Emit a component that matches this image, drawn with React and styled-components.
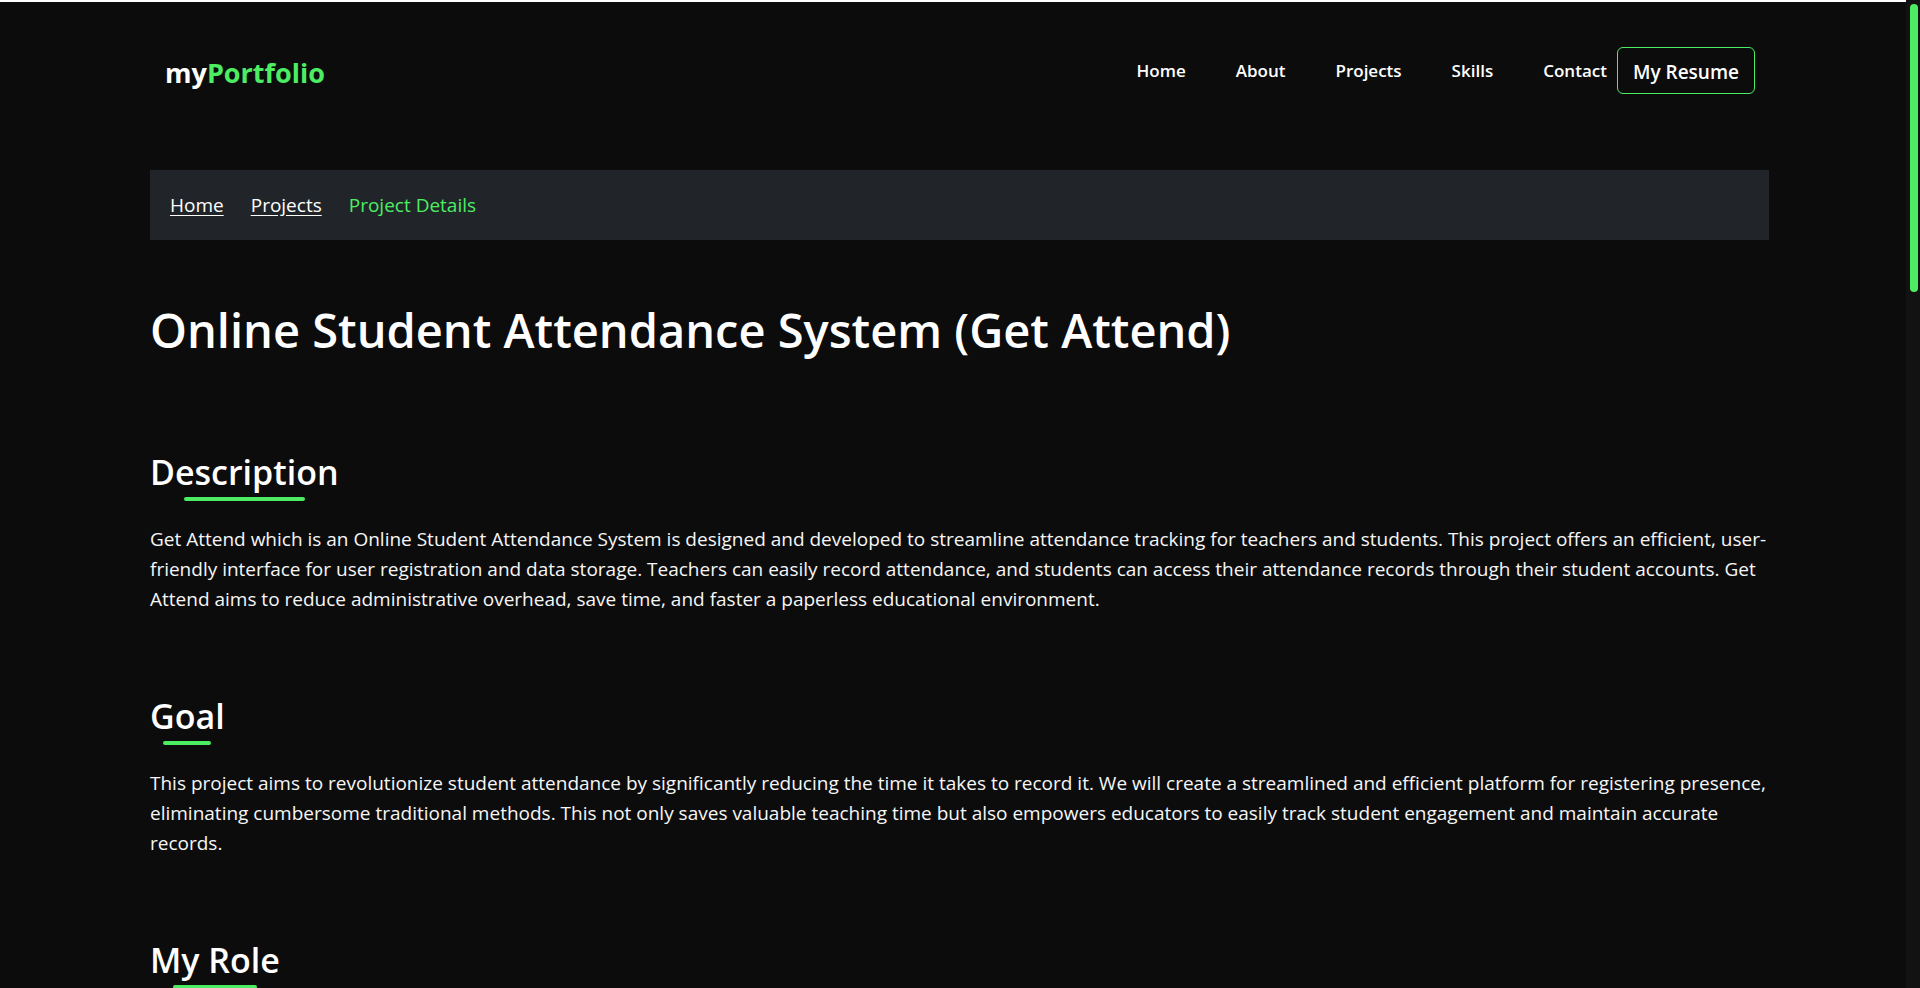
import styled, { createGlobalStyle } from 'styled-components'

const GlobalStyle = createGlobalStyle`
  body {
    margin: 0;
    border-top: 2px solid #ffffff;
    background: #0c0c0c;
    color: #ffffff;
    font-family: "Open Sans", "Noto Sans", sans-serif;
  }
  * {
    box-sizing: border-box;
  }
`

const green = '#4ded63'

const Page = styled.div`
  padding: 0 151px 0 150px;
`

const ScrollTrack = styled.div`
  position: fixed;
  top: 0;
  right: 0;
  width: 14px;
  height: 100vh;
  background: #121212;
`

const ScrollThumb = styled.div`
  margin: 4px 2px 0 4px;
  height: 288px;
  border-radius: 4px;
  background: ${green};
`

const Header = styled.header`
  height: 138px;
  padding: 0 14px 0 15px;
  display: flex;
  align-items: center;
  justify-content: space-between;
`

const Logo = styled.a`
  font-size: 27px;
  font-weight: 700;
  color: #ffffff;
  text-decoration: none;
  margin-top: 3px;
  span {
    color: ${green};
  }
`

const Nav = styled.nav`
  display: flex;
  align-items: center;
`

const NavLink = styled.a`
  font-size: 17px;
  font-weight: 600;
  color: #ffffff;
  text-decoration: none;
  margin-left: 50px;
  margin-bottom: 2px;
`

const ResumeButton = styled.button`
  margin: 0 0 1px 10px;
  height: 47px;
  padding: 2px 15px 0;
  background: transparent;
  border: 1px solid ${green};
  border-radius: 6px;
  color: #ffffff;
  font-family: inherit;
  font-size: 19px;
  font-weight: 600;
`

const Breadcrumb = styled.div`
  margin-top: 30px;
  height: 70px;
  background: #212529;
  display: flex;
  align-items: center;
  gap: 27px;
  padding: 0 20px;
  font-size: 19px;
`

const Crumb = styled.a`
  color: ${({ $active }) => ($active ? green : '#ffffff')};
  text-decoration: ${({ $active }) => ($active ? 'none' : 'underline')};
  text-underline-offset: 3px;
`

const Title = styled.h1`
  margin: 62px 0 0;
  font-size: 47px;
  font-weight: 600;
  line-height: 1.2;
`

const Section = styled.section`
  margin-top: ${({ $first }) => ($first ? '94px' : '82px')};
`

const Heading = styled.h2`
  display: inline-block;
  margin: 0;
  font-size: 34px;
  font-weight: 600;
  line-height: 1.2;
  &::after {
    content: '';
    display: block;
    width: 64%;
    height: 4px;
    margin: 4px auto 0;
    border-radius: 2px;
    background: ${green};
  }
`

const Text = styled.p`
  margin: 23px 0 0;
  font-size: 19px;
  line-height: 30px;
  color: #f6f6f6;
`

const List = styled.ul`
  margin: 23px 0 0;
  padding-left: 24px;
  font-size: 19px;
  line-height: 30px;
  color: #f6f6f6;
`

const Footer = styled.footer`
  margin-top: 120px;
  padding: 40px 0 60px;
  border-top: 1px solid #212529;
  text-align: center;
  font-size: 16px;
  color: #9a9a9a;
`

const sections = [
  {
    title: 'Description',
    text: 'Get Attend which is an Online Student Attendance System is designed and developed to streamline attendance tracking for teachers and students. This project offers an efficient, user-friendly interface for user registration and data storage. Teachers can easily record attendance, and students can access their attendance records through their student accounts. Get Attend aims to reduce administrative overhead, save time, and faster a paperless educational environment.',
  },
  {
    title: 'Goal',
    text: 'This project aims to revolutionize student attendance by significantly reducing the time it takes to record it. We will create a streamlined and efficient platform for registering presence, eliminating cumbersome traditional methods. This not only saves valuable teaching time but also empowers educators to easily track student engagement and maintain accurate records.',
  },
  {
    title: 'My Role',
    text: 'As the full stack developer of this project, I designed the database schema, built the backend for user registration and attendance storage, and developed the responsive interface used by both teachers and students. I also handled testing and deployment of the system.',
  },
  {
    title: 'Technologies Used',
    list: ['HTML, CSS and JavaScript', 'Bootstrap', 'PHP', 'MySQL', 'XAMPP'],
  },
  {
    title: 'Key Features',
    list: [
      'Separate teacher and student accounts with secure login',
      'Quick attendance recording for each class session',
      'Attendance history and reports for students',
      'Course and student management for teachers',
    ],
  },
  {
    title: 'Challenges',
    text: 'Keeping attendance records consistent across courses and sessions required careful database design. Building a simple interface that teachers could use quickly during class was another important challenge of the project.',
  },
  {
    title: 'Outcome',
    text: 'Get Attend reduces the time spent on taking attendance, keeps records organized in one place and gives students clear access to their own attendance history.',
  },
]

const App = () => {
  return (
    <>
      <GlobalStyle />
      <ScrollTrack>
        <ScrollThumb />
      </ScrollTrack>
      <Page>
        <Header>
          <Logo href="#">my<span>Portfolio</span></Logo>
          <Nav>
            <NavLink href="#">Home</NavLink>
            <NavLink href="#">About</NavLink>
            <NavLink href="#">Projects</NavLink>
            <NavLink href="#">Skills</NavLink>
            <NavLink href="#">Contact</NavLink>
            <ResumeButton>My Resume</ResumeButton>
          </Nav>
        </Header>
        <Breadcrumb>
          <Crumb href="#">Home</Crumb>
          <Crumb href="#">Projects</Crumb>
          <Crumb $active>Project Details</Crumb>
        </Breadcrumb>
        <Title>Online Student Attendance System (Get Attend)</Title>
        {sections.map((s, i) => (
          <Section key={s.title} $first={i === 0}>
            <Heading>{s.title}</Heading>
            {s.text ? <Text>{s.text}</Text> : null}
            {s.list ? (
              <List>
                {s.list.map((item) => <li key={item}>{item}</li>)}
              </List>
            ) : null}
          </Section>
        ))}
        <Footer>© 2024 myPortfolio. All rights reserved.</Footer>
      </Page>
    </>
  )
}

export default App
